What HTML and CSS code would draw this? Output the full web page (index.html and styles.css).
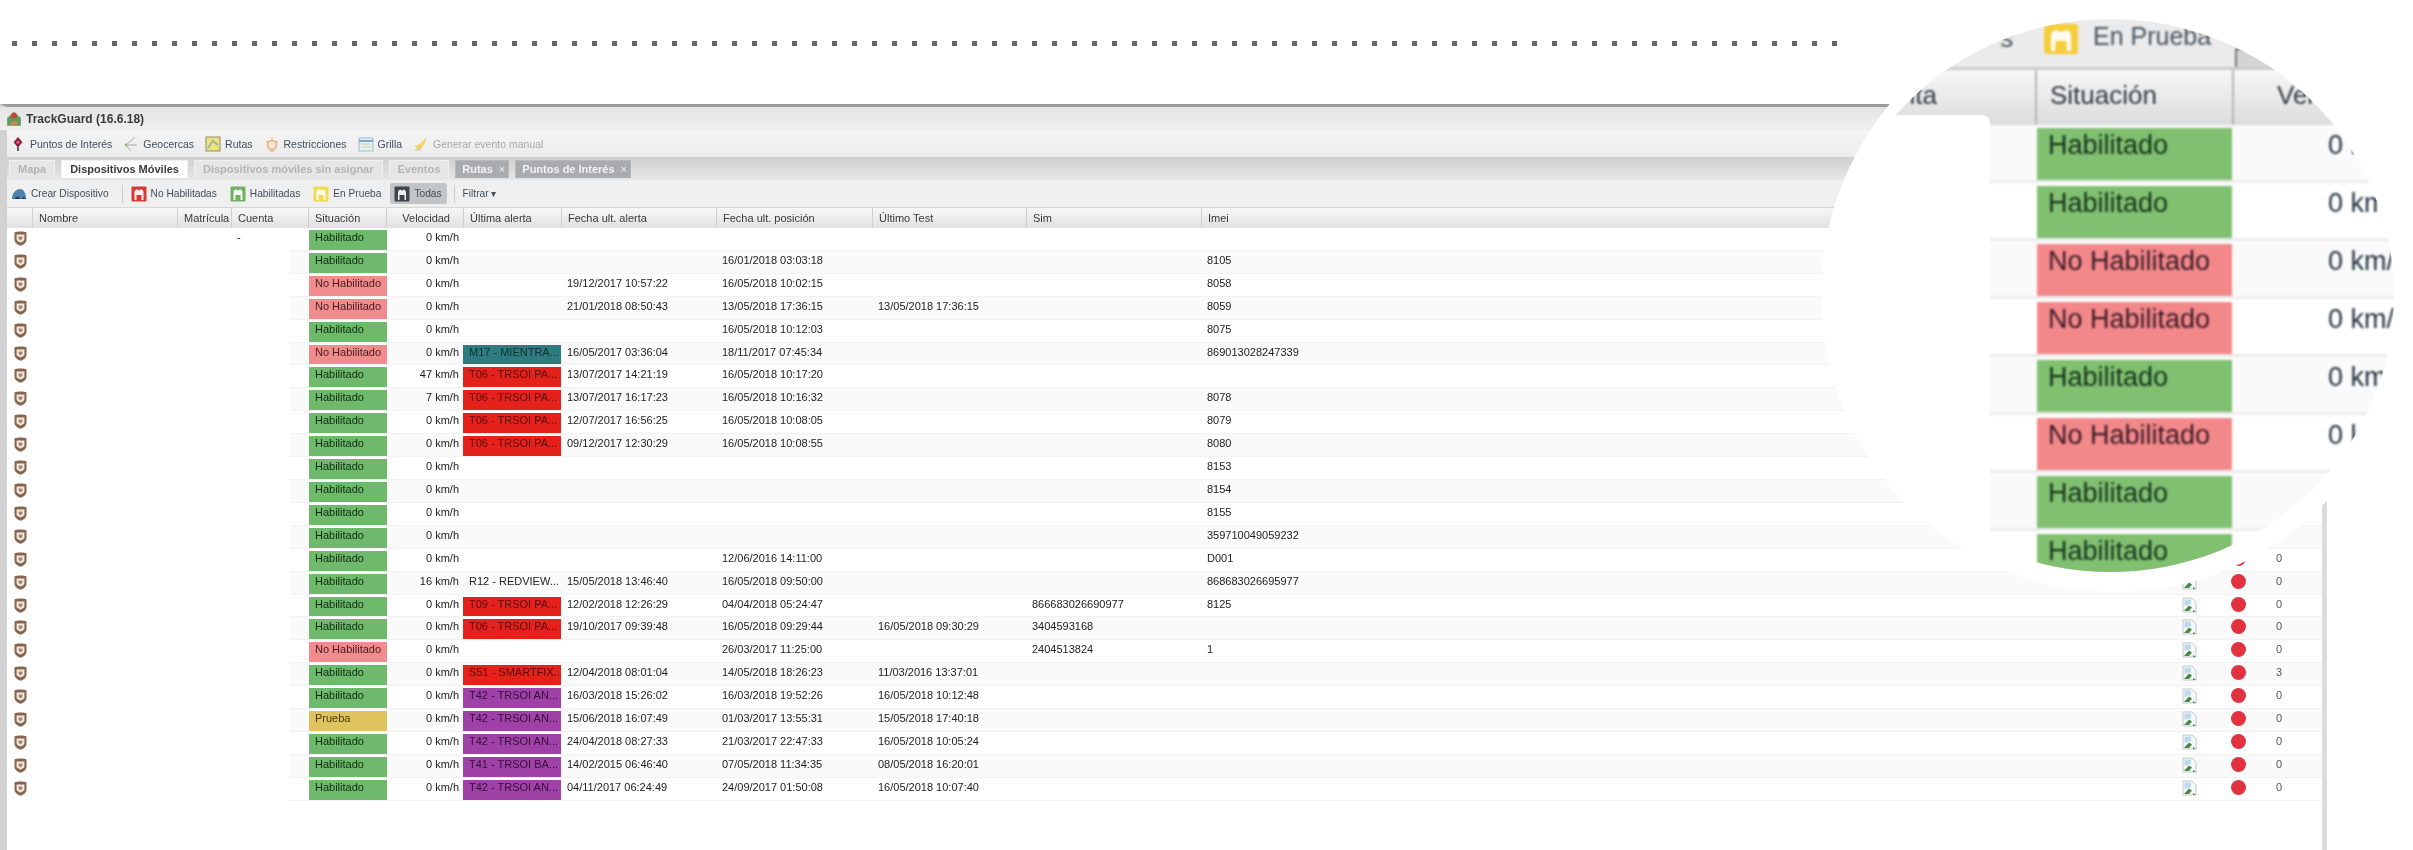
FILE: index.html
```html
<!DOCTYPE html>
<html lang="es">
<head>
<meta charset="utf-8">
<title>TrackGuard</title>
<link rel="stylesheet" href="styles.css">
</head>
<body>
<svg class="defs" aria-hidden="true">
  <symbol id="i-shield" viewBox="0 0 13 15"><path d="M.5 1.5C3 .2 10 .2 12.5 1.5V9C12.5 12 8.5 14 6.5 14.8 4.5 14 .5 12 .5 9Z" fill="#87654f"/><path d="M2.6 3.4H10.4V8.6C10.4 10 8 11 6.5 11.6 5 11 2.6 10 2.6 8.6Z" fill="#f1e9df"/><path d="M4.6 5.4H8.4V7.8L6.5 9.4 4.6 7.8Z" fill="#a5866f"/></symbol>
  <symbol id="i-broken" viewBox="0 0 15 16"><path d="M1 1H10L14 5V15H1Z" fill="#f7f8f9" stroke="#c0c8cd"/><path d="M2.5 2.5H9V7L2.5 9Z" fill="#bcd8ec"/><path d="M2 14L7 8.5 10 10.500 7 14Z" fill="#478a44"/><path d="M11 13L14 15H11Z" fill="#478a44"/></symbol>
  <symbol id="i-app" viewBox="0 0 14 14"><path d="M7 1L13 6V13H1V6Z" fill="#5d9c58"/><circle cx="7" cy="4" r="2.6" fill="#c8453f"/><path d="M4 9H10V13H4Z" fill="#b98c5a"/></symbol>
  <symbol id="i-pin" viewBox="0 0 16 18"><path d="M8 1L13 7 8 13 3 7Z" fill="#8f1c36"/><circle cx="8" cy="7" r="1.8" fill="#e2607c"/><path d="M7 12H9V17H7Z" fill="#555"/></symbol>
  <symbol id="i-geo" viewBox="0 0 16 16"><path d="M12 1L3 9 8 15M3 9H14" fill="none" stroke="#a6adab"/><circle cx="3" cy="9" r="1.4" fill="#9db88e"/></symbol>
  <symbol id="i-map" viewBox="0 0 16 16"><rect x="1" y="1" width="14" height="14" fill="#efe27c" stroke="#8f8f72"/><path d="M3 12L8 5 13 9" fill="none" stroke="#9cb4a0" stroke-width="2"/></symbol>
  <symbol id="i-restr" viewBox="0 0 16 16"><path d="M8 1V4M2 5L4.500 6.500M14 5L11.500 6.500" stroke="#f0c098" stroke-width="1.500"/><circle cx="8" cy="9" r="4.500" fill="#fbe8d4" stroke="#eaa878" stroke-width="1.500"/><path d="M6 15H10" stroke="#eaa878"/></symbol>
  <symbol id="i-grid" viewBox="0 0 16 16"><rect x="1" y="2" width="14" height="13" fill="#e4f0f8" stroke="#9ebcd4"/><path d="M1 5H15" stroke="#7ba6c8" stroke-width="2"/><path d="M3 8H13M3 11H13" stroke="#d6d28c"/></symbol>
  <symbol id="i-event" viewBox="0 0 16 16"><path d="M2 9C5 10 8 7 14 1 12 8 9 13 5 15Z" fill="#ecd468"/><path d="M2 14H8" stroke="#d4d4c4" stroke-width="2"/></symbol>
  <symbol id="i-car" viewBox="0 0 16 14"><path d="M1 12C1 6 5 2 9 2 13 2 15 7 15 12Z" fill="#4f82ac"/><path d="M4 12A2.500 2.500 0 0 1 9 12ZM10.500 12A2.300 2.300 0 0 1 15 12Z" fill="#1f3f5c"/></symbol>
  <symbol id="i-state" viewBox="0 0 16 16" preserveAspectRatio="none"><rect x=".5" y=".5" width="15" height="15" rx="1" fill="currentColor"/><path d="M3.500 14V6.500C3.500 3 7 3 8 4.800 9 3 12.500 3 12.500 6.500V14H10.500V9H5.500V14Z" fill="#fff" opacity=".92"/></symbol>
  <symbol id="i-todas" viewBox="0 0 16 16"><rect x=".5" y=".5" width="15" height="15" rx="1" fill="#3f474c"/><path d="M4 14V7C4 3 7 3 8 5 9 3 12 3 12 7V14H10.500V9H5.500V14Z" fill="#eef0f0"/></symbol>
</svg>

<div class="dots"></div>

<main class="win">
  <header class="title"><svg class="ic"><use href="#i-app"/></svg><b>TrackGuard (16.6.18)</b></header>

  <nav class="bar one">
    <span class="tool"><svg class="ic"><use href="#i-pin"/></svg>Puntos de Interés</span>
    <span class="tool"><svg class="ic"><use href="#i-geo"/></svg>Geocercas</span>
    <span class="tool"><svg class="ic"><use href="#i-map"/></svg>Rutas</span>
    <span class="tool"><svg class="ic"><use href="#i-restr"/></svg>Restricciones</span>
    <span class="tool"><svg class="ic"><use href="#i-grid"/></svg>Grilla</span>
    <span class="tool off"><svg class="ic"><use href="#i-event"/></svg>Generar evento manual</span>
  </nav>

  <nav class="tabs">
    <span class="tab">Mapa</span>
    <span class="tab on">Dispositivos Móviles</span>
    <span class="tab">Dispositivos móviles sin asignar</span>
    <span class="tab">Eventos</span>
    <span class="tab dark">Rutas<i>×</i></span>
    <span class="tab dark">Puntos de Interés<i>×</i></span>
  </nav>

  <nav class="bar two">
    <span class="tool"><svg class="ic"><use href="#i-car"/></svg>Crear Dispositivo</span>
    <span class="sep"></span>
    <span class="tool"><svg class="ic red"><use href="#i-state"/></svg>No Habilitadas</span>
    <span class="tool"><svg class="ic green"><use href="#i-state"/></svg>Habilitadas</span>
    <span class="tool"><svg class="ic yellow"><use href="#i-state"/></svg>En Prueba</span>
    <span class="tool pressed"><svg class="ic"><use href="#i-todas"/></svg>Todas</span>
    <span class="sep"></span>
    <span class="tool filter">Filtrar ▾</span>
  </nav>

  <div class="head grid">
    <span></span><span>Nombre</span><span>Matrícula</span><span>Cuenta</span><span>Situación</span><span class="r">Velocidad</span><span>Última alerta</span><span>Fecha ult. alerta</span><span>Fecha ult. posición</span><span>Último Test</span><span>Sim</span><span>Imei</span><span></span><span></span><span></span>
  </div>

  <section class="rows">
    <div class="row grid"><svg class="sh"><use href="#i-shield"/></svg><span></span><span></span><span>-</span><span class="st ok">Habilitado</span><span class="r">0 km/h</span><span></span><span></span><span></span><span></span><span></span><span></span><svg class="br"><use href="#i-broken"/></svg><i class="dot"></i><span class="n">0</span></div>
    <div class="row grid"><svg class="sh"><use href="#i-shield"/></svg><span></span><span></span><span></span><span class="st ok">Habilitado</span><span class="r">0 km/h</span><span></span><span></span><span>16/01/2018 03:03:18</span><span></span><span></span><span>8105</span><svg class="br"><use href="#i-broken"/></svg><i class="dot"></i><span class="n">0</span></div>
    <div class="row grid"><svg class="sh"><use href="#i-shield"/></svg><span></span><span></span><span></span><span class="st no">No Habilitado</span><span class="r">0 km/h</span><span></span><span>19/12/2017 10:57:22</span><span>16/05/2018 10:02:15</span><span></span><span></span><span>8058</span><svg class="br"><use href="#i-broken"/></svg><i class="dot"></i><span class="n">0</span></div>
    <div class="row grid"><svg class="sh"><use href="#i-shield"/></svg><span></span><span></span><span></span><span class="st no">No Habilitado</span><span class="r">0 km/h</span><span></span><span>21/01/2018 08:50:43</span><span>13/05/2018 17:36:15</span><span>13/05/2018 17:36:15</span><span></span><span>8059</span><svg class="br"><use href="#i-broken"/></svg><i class="dot"></i><span class="n">0</span></div>
    <div class="row grid"><svg class="sh"><use href="#i-shield"/></svg><span></span><span></span><span></span><span class="st ok">Habilitado</span><span class="r">0 km/h</span><span></span><span></span><span>16/05/2018 10:12:03</span><span></span><span></span><span>8075</span><svg class="br"><use href="#i-broken"/></svg><i class="dot"></i><span class="n">0</span></div>
    <div class="row grid"><svg class="sh"><use href="#i-shield"/></svg><span></span><span></span><span></span><span class="st no">No Habilitado</span><span class="r">0 km/h</span><span class="al teal">M17 - MIENTRA...</span><span>16/05/2017 03:36:04</span><span>18/11/2017 07:45:34</span><span></span><span></span><span>869013028247339</span><svg class="br"><use href="#i-broken"/></svg><i class="dot"></i><span class="n">0</span></div>
    <div class="row grid"><svg class="sh"><use href="#i-shield"/></svg><span></span><span></span><span></span><span class="st ok">Habilitado</span><span class="r">47 km/h</span><span class="al crit">T06 - TRSOI PA...</span><span>13/07/2017 14:21:19</span><span>16/05/2018 10:17:20</span><span></span><span></span><span></span><svg class="br"><use href="#i-broken"/></svg><i class="dot"></i><span class="n">0</span></div>
    <div class="row grid"><svg class="sh"><use href="#i-shield"/></svg><span></span><span></span><span></span><span class="st ok">Habilitado</span><span class="r">7 km/h</span><span class="al crit">T06 - TRSOI PA...</span><span>13/07/2017 16:17:23</span><span>16/05/2018 10:16:32</span><span></span><span></span><span>8078</span><svg class="br"><use href="#i-broken"/></svg><i class="dot"></i><span class="n">0</span></div>
    <div class="row grid"><svg class="sh"><use href="#i-shield"/></svg><span></span><span></span><span></span><span class="st ok">Habilitado</span><span class="r">0 km/h</span><span class="al crit">T06 - TRSOI PA...</span><span>12/07/2017 16:56:25</span><span>16/05/2018 10:08:05</span><span></span><span></span><span>8079</span><svg class="br"><use href="#i-broken"/></svg><i class="dot"></i><span class="n">0</span></div>
    <div class="row grid"><svg class="sh"><use href="#i-shield"/></svg><span></span><span></span><span></span><span class="st ok">Habilitado</span><span class="r">0 km/h</span><span class="al crit">T06 - TRSOI PA...</span><span>09/12/2017 12:30:29</span><span>16/05/2018 10:08:55</span><span></span><span></span><span>8080</span><svg class="br"><use href="#i-broken"/></svg><i class="dot"></i><span class="n">0</span></div>
    <div class="row grid"><svg class="sh"><use href="#i-shield"/></svg><span></span><span></span><span></span><span class="st ok">Habilitado</span><span class="r">0 km/h</span><span></span><span></span><span></span><span></span><span></span><span>8153</span><svg class="br"><use href="#i-broken"/></svg><i class="dot"></i><span class="n">0</span></div>
    <div class="row grid"><svg class="sh"><use href="#i-shield"/></svg><span></span><span></span><span></span><span class="st ok">Habilitado</span><span class="r">0 km/h</span><span></span><span></span><span></span><span></span><span></span><span>8154</span><svg class="br"><use href="#i-broken"/></svg><i class="dot"></i><span class="n">0</span></div>
    <div class="row grid"><svg class="sh"><use href="#i-shield"/></svg><span></span><span></span><span></span><span class="st ok">Habilitado</span><span class="r">0 km/h</span><span></span><span></span><span></span><span></span><span></span><span>8155</span><svg class="br"><use href="#i-broken"/></svg><i class="dot"></i><span class="n">0</span></div>
    <div class="row grid"><svg class="sh"><use href="#i-shield"/></svg><span></span><span></span><span></span><span class="st ok">Habilitado</span><span class="r">0 km/h</span><span></span><span></span><span></span><span></span><span></span><span>359710049059232</span><svg class="br"><use href="#i-broken"/></svg><i class="dot"></i><span class="n">0</span></div>
    <div class="row grid"><svg class="sh"><use href="#i-shield"/></svg><span></span><span></span><span></span><span class="st ok">Habilitado</span><span class="r">0 km/h</span><span></span><span></span><span>12/06/2016 14:11:00</span><span></span><span></span><span>D001</span><svg class="br"><use href="#i-broken"/></svg><i class="dot"></i><span class="n">0</span></div>
    <div class="row grid"><svg class="sh"><use href="#i-shield"/></svg><span></span><span></span><span></span><span class="st ok">Habilitado</span><span class="r">16 km/h</span><span class="al">R12 - REDVIEW...</span><span>15/05/2018 13:46:40</span><span>16/05/2018 09:50:00</span><span></span><span></span><span>868683026695977</span><svg class="br"><use href="#i-broken"/></svg><i class="dot"></i><span class="n">0</span></div>
    <div class="row grid"><svg class="sh"><use href="#i-shield"/></svg><span></span><span></span><span></span><span class="st ok">Habilitado</span><span class="r">0 km/h</span><span class="al crit">T09 - TRSOI PA...</span><span>12/02/2018 12:26:29</span><span>04/04/2018 05:24:47</span><span></span><span>866683026690977</span><span>8125</span><svg class="br"><use href="#i-broken"/></svg><i class="dot"></i><span class="n">0</span></div>
    <div class="row grid"><svg class="sh"><use href="#i-shield"/></svg><span></span><span></span><span></span><span class="st ok">Habilitado</span><span class="r">0 km/h</span><span class="al crit">T06 - TRSOI PA...</span><span>19/10/2017 09:39:48</span><span>16/05/2018 09:29:44</span><span>16/05/2018 09:30:29</span><span>3404593168</span><span></span><svg class="br"><use href="#i-broken"/></svg><i class="dot"></i><span class="n">0</span></div>
    <div class="row grid"><svg class="sh"><use href="#i-shield"/></svg><span></span><span></span><span></span><span class="st no">No Habilitado</span><span class="r">0 km/h</span><span></span><span></span><span>26/03/2017 11:25:00</span><span></span><span>2404513824</span><span>1</span><svg class="br"><use href="#i-broken"/></svg><i class="dot"></i><span class="n">0</span></div>
    <div class="row grid"><svg class="sh"><use href="#i-shield"/></svg><span></span><span></span><span></span><span class="st ok">Habilitado</span><span class="r">0 km/h</span><span class="al crit">S51 - SMARTFIX...</span><span>12/04/2018 08:01:04</span><span>14/05/2018 18:26:23</span><span>11/03/2016 13:37:01</span><span></span><span></span><svg class="br"><use href="#i-broken"/></svg><i class="dot"></i><span class="n">3</span></div>
    <div class="row grid"><svg class="sh"><use href="#i-shield"/></svg><span></span><span></span><span></span><span class="st ok">Habilitado</span><span class="r">0 km/h</span><span class="al vio">T42 - TRSOI AN...</span><span>16/03/2018 15:26:02</span><span>16/03/2018 19:52:26</span><span>16/05/2018 10:12:48</span><span></span><span></span><svg class="br"><use href="#i-broken"/></svg><i class="dot"></i><span class="n">0</span></div>
    <div class="row grid"><svg class="sh"><use href="#i-shield"/></svg><span></span><span></span><span></span><span class="st test">Prueba</span><span class="r">0 km/h</span><span class="al vio">T42 - TRSOI AN...</span><span>15/06/2018 16:07:49</span><span>01/03/2017 13:55:31</span><span>15/05/2018 17:40:18</span><span></span><span></span><svg class="br"><use href="#i-broken"/></svg><i class="dot"></i><span class="n">0</span></div>
    <div class="row grid"><svg class="sh"><use href="#i-shield"/></svg><span></span><span></span><span></span><span class="st ok">Habilitado</span><span class="r">0 km/h</span><span class="al vio">T42 - TRSOI AN...</span><span>24/04/2018 08:27:33</span><span>21/03/2017 22:47:33</span><span>16/05/2018 10:05:24</span><span></span><span></span><svg class="br"><use href="#i-broken"/></svg><i class="dot"></i><span class="n">0</span></div>
    <div class="row grid"><svg class="sh"><use href="#i-shield"/></svg><span></span><span></span><span></span><span class="st ok">Habilitado</span><span class="r">0 km/h</span><span class="al vio">T41 - TRSOI BA...</span><span>14/02/2015 06:46:40</span><span>07/05/2018 11:34:35</span><span>08/05/2018 16:20:01</span><span></span><span></span><svg class="br"><use href="#i-broken"/></svg><i class="dot"></i><span class="n">0</span></div>
    <div class="row grid"><svg class="sh"><use href="#i-shield"/></svg><span></span><span></span><span></span><span class="st ok">Habilitado</span><span class="r">0 km/h</span><span class="al vio">T42 - TRSOI AN...</span><span>04/11/2017 06:24:49</span><span>24/09/2017 01:50:08</span><span>16/05/2018 10:07:40</span><span></span><span></span><svg class="br"><use href="#i-broken"/></svg><i class="dot"></i><span class="n">0</span></div>
  </section>
</main>

<aside class="halo"></aside>
<aside class="lens">
  <div class="lens-body">
    <div class="l-bar">
      <span class="l-prev">Habilitadas</span>
      <svg class="l-ic"><use href="#i-state"/></svg>
      <span class="l-label">En Prueba</span>
      <span class="l-btn"></span>
    </div>
    <div class="l-head l-grid">
      <span class="l-cuenta">Cuenta</span><span>Situación</span><span class="l-vel">Velocidad</span>
    </div>
    <div class="l-row l-grid"><span></span><span class="l-st ok">Habilitado</span><span class="l-kmh">0 km/h</span></div>
    <div class="l-row l-grid"><span></span><span class="l-st ok">Habilitado</span><span class="l-kmh">0 km/h</span></div>
    <div class="l-row l-grid"><span></span><span class="l-st no">No Habilitado</span><span class="l-kmh">0 km/h</span></div>
    <div class="l-row l-grid"><span></span><span class="l-st no">No Habilitado</span><span class="l-kmh">0 km/h</span></div>
    <div class="l-row l-grid"><span></span><span class="l-st ok">Habilitado</span><span class="l-kmh">0 km/h</span></div>
    <div class="l-row l-grid"><span></span><span class="l-st no">No Habilitado</span><span class="l-kmh">0 km/h</span></div>
    <div class="l-row l-grid"><span></span><span class="l-st ok">Habilitado</span><span class="l-kmh">0 km/h</span></div>
    <div class="l-row l-grid"><span></span><span class="l-st ok">Habilitado</span><span class="l-kmh">0 km/h</span></div>
  </div>
  <div class="l-mask"></div>
</aside>
</body>
</html>
```

FILE: styles.css
```css
* { box-sizing: border-box; }
html, body { margin: 0; height: 850px; overflow: hidden; background: #fff; }
body { position: relative; font: 11px/14px "Liberation Sans", Arial, sans-serif; color: #222; }
.defs { position: absolute; width: 0; height: 0; }

.dots {
  height: 5px; width: 1825px; margin: 41px 0 0 12px;
  background: repeating-linear-gradient(90deg, #666 0 5px, transparent 5px 20px);
}

.win {
  margin-top: 58px; width: 2327px; height: 746px;
  border-top: 3px solid #9c9c9c; border-left: 7px solid #d2d2d2; border-right: 5px solid #dcdcdc;
  background: #fff; filter: blur(.7px);
}
.ic { width: 16px; height: 16px; flex: none; }
.red { color: #d63a35; } .green { color: #6fb062; } .yellow { color: #f2dc4e; }

.title {
  height: 23px; margin-left: -7px; padding-left: 6px; display: flex; align-items: center; gap: 4px;
  background: linear-gradient(#e4e4e4, #f0f0f0); font-size: 12px; color: #3a3a3a;
}
.bar { display: flex; align-items: center; color: #434e5a; }
.bar.one { height: 27px; padding-left: 3px; gap: 11px; font-size: 10.5px; background: linear-gradient(#f4f4f4, #ececec); }
.bar.two { height: 27px; padding-left: 4px; gap: 13px; font-size: 10.2px; background: #efefef; }
.tool { display: flex; align-items: center; gap: 4px; white-space: nowrap; }
.off { color: #a8a8a8; }
.sep { width: 1px; height: 18px; background: #ccc; margin: 0 -5px 0 0; }
.pressed { background: #c2c4c6; height: 21px; padding: 0 5px 0 4px; margin: 0 -6px 0 -4px; border-radius: 2px; }

.tabs {
  height: 23px; display: flex; align-items: flex-end; gap: 6px; padding: 0 0 2px 2px;
  background: linear-gradient(#cfcfcf, #e6e6e6); font-weight: bold; color: #b4b4b4;
}
.tab { height: 18px; line-height: 17px; padding: 0 8px; background: #e6e6e6; border: 1px solid #f0f0f0; border-bottom: 0; }
.tab.on { background: #fff; color: #3a3a3a; }
.tab.dark { background: #a9acae; border-color: #b8b8b8; color: #f2f2f2; padding: 0 3px 0 6px; }
.tab i { font-style: normal; font-weight: normal; margin-left: 6px; }

.grid {
  display: grid;
  grid-template-columns: 25px 145px 54px 77px 78px 77px 98px 155px 156px 154px 175px 969px 40px 58px 54px;
}
.head {
  height: 21px; background: linear-gradient(#f7f7f7, #e1e1e1); border-top: 1px solid #d6d6d6; color: #3a3a3a; align-items: stretch;
}
.head span { padding: 3px 0 0 6px; border-left: 1px solid #d0d0d0; }
.head span:first-child { border: 0; }
.head .r { padding: 3px 13px 0 0; }
.r { text-align: right; }

.row {
  height: 22.92px; padding-top: 2px;
  background: linear-gradient(#f2f2f2, #f2f2f2) no-repeat 283px 100% / 100% 1px, #fff;
}
.row:nth-child(even) {
  background: linear-gradient(#f2f2f2, #f2f2f2) no-repeat 283px 100% / 100% 1px,
    linear-gradient(90deg, #fff 0 283px, #fafafa 283px);
}
.row > span { padding-left: 6px; white-space: nowrap; }
.row > .r { padding: 0 4px 0 0; }
.sh { width: 13px; height: 15px; margin: 1px 0 0 7px; }
.br { width: 15px; height: 16px; margin: 0 0 0 12px; }
.dot { width: 15px; height: 15px; border-radius: 50%; background: #e2323f; margin: 0 0 0 21px; }
.row > .n { padding-left: 8px; color: #555; }
.st { margin: 0 -1px 1px 1px; color: #0f2c0f; }
.ok { background: #6fb96d; } .no { background: #f08c8e; color: #4a1c1c; } .test { background: #dfc35e; color: #4a3c08; }
.al { margin-bottom: 1px; overflow: hidden; }
.crit { background: #e5211c; color: #5a0a0a; }
.teal { background: #2f7c80; color: #0a3234; }
.vio { background: #a041a8; color: #330e3a; }

.halo { position: absolute; left: 1821px; top: -2px; width: 588px; height: 594px; border-radius: 50%; background: #fff; }
.lens { position: absolute; left: 1827px; top: 19px; width: 567px; height: 553px; border-radius: 50%; overflow: hidden; background: #fff; }
.lens-body { width: 567px; filter: blur(.8px); color: #243240; font-size: 27px; line-height: 34px; }
.l-bar { height: 51px; padding-top: 4px; display: flex; background: #ebebeb; border-bottom: 3px solid #ccc; color: #46545f; font-size: 25px; }
.l-prev { width: 13px; margin: 0 30px 0 173px; overflow: hidden; direction: rtl; white-space: nowrap; line-height: 30px; }
.l-ic { width: 36px; height: 32px; color: #f5cc3a; }
.l-label { margin-left: 14px; line-height: 26px; white-space: nowrap; }
.l-btn { width: 60px; height: 19px; margin: 25px 0 0 24px; border: 2px solid #777; border-bottom: 0; background: #d4d4d4; }
.l-grid { display: grid; grid-template-columns: 208px 197px 1fr; }
.l-head { height: 55px; line-height: 50px; font-size: 26px; background: linear-gradient(#f7f7f7, #dcdcdc); color: #333a40; }
.l-head span { padding-left: 13px; border-left: 2px solid #b4b4b4; white-space: nowrap; }
.l-head .l-cuenta { border: 0; padding: 0 98px 0 0; text-align: right; }
.l-head .l-vel { padding-left: 43px; }
.l-row { height: 58px; padding-top: 3px; border-bottom: 3px solid #ececec; background: #fff; }
.l-row:nth-child(odd) { background: #fafafa; }
.l-st { margin-left: 2px; padding-left: 11px; color: #15321b; white-space: nowrap; }
.l-st.ok { background: #80c070; }
.l-st.no { background: #f2888a; color: #3a1a26; }
.l-kmh { padding-left: 96px; white-space: nowrap; }
.l-mask { position: absolute; left: 0; top: 96px; bottom: 0; width: 163px; background: #fff; border-top-right-radius: 8px; }
```
